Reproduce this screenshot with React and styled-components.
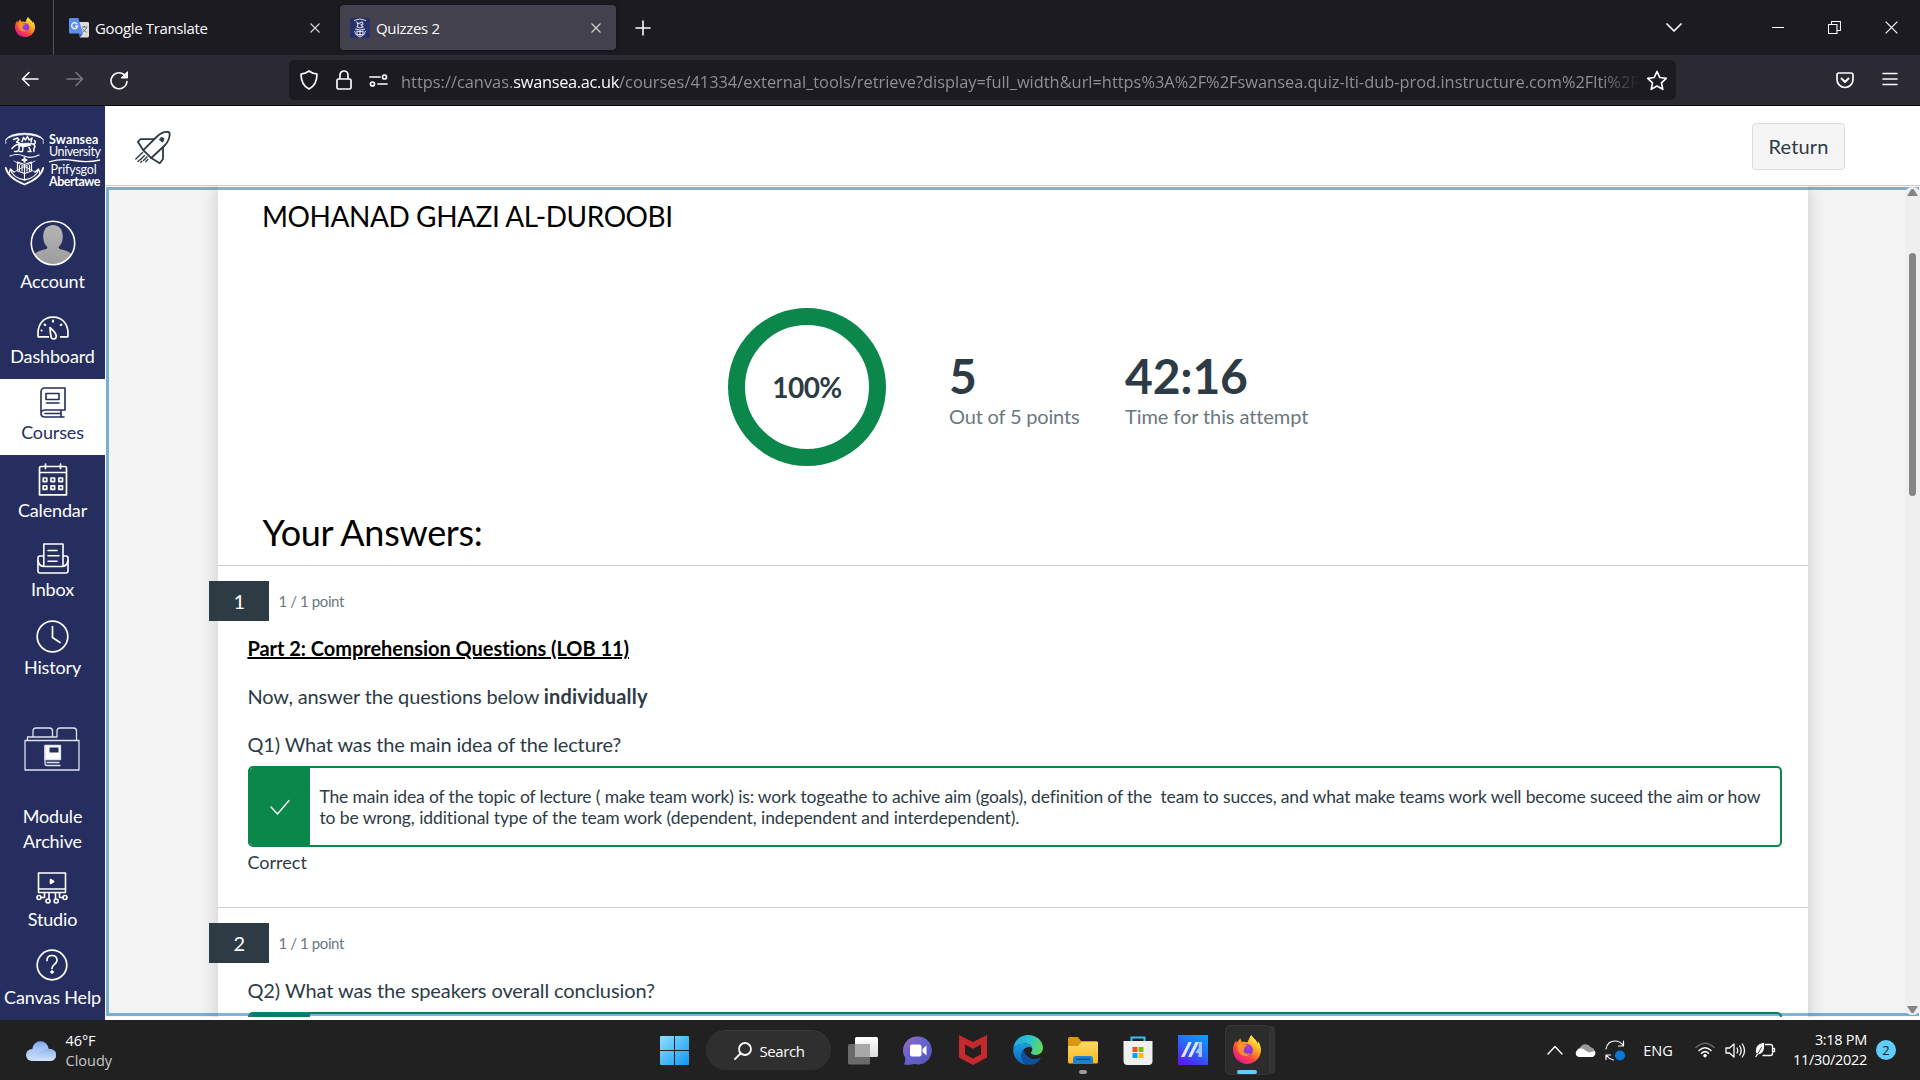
import React from 'react';
import styled, { createGlobalStyle } from 'styled-components';

const lato = `Lato, "Liberation Sans", sans-serif`;
const system = `"Open Sans", "Noto Sans", sans-serif`;
const navy = '#252e5e';
const green = '#0b874b';
const ink = '#2d3b45';

const Global = createGlobalStyle`
  * { box-sizing: border-box; }
  html, body { margin: 0; padding: 0; overflow: hidden; background: #fff; }
  svg { display: block; flex: none; }
`;

const Screen = styled.div`
  width: 1920px;
  height: 1080px;
  display: flex;
  flex-direction: column;
  overflow: hidden;
  font-family: ${lato};
  color: ${ink};
`;

/* ---------- browser chrome ---------- */

const TabStrip = styled.div`
  height: 55px;
  flex: none;
  display: flex;
  align-items: stretch;
  background: #1c1b22;
  color: #fbfbfe;
  font-family: ${system};
`;

const PinnedSlot = styled.div`
  width: 54px;
  display: flex;
  align-items: center;
  padding: 0 0 1px 15px;
  border-right: 1px solid #53525a;
`;

const Tab = styled.div`
  width: ${p => p.$width}px;
  height: 45px;
  margin: 5px 0 0 ${p => p.$left}px;
  padding: 0 13px 0 ${p => p.$pad}px;
  display: flex;
  align-items: center;
  border-radius: 4px;
  background: ${p => (p.$active ? '#42414d' : 'transparent')};
  box-shadow: ${p => (p.$active ? '0 0 4px rgba(0,0,0,.5)' : 'none')};
`;

const TabTitle = styled.span`
  flex: 1;
  margin-left: 6px;
  font-size: 15px;
  line-height: 20px;
  letter-spacing: -0.35px;
  white-space: nowrap;
`;

const NewTab = styled.div`
  width: 54px;
  display: flex;
  align-items: center;
  justify-content: center;
`;

const WindowControls = styled.div`
  margin-left: auto;
  display: flex;
  align-items: center;
`;

const ControlSlot = styled.div`
  width: ${p => p.$width}px;
  height: 54px;
  display: flex;
  align-items: center;
  justify-content: center;
`;

const Toolbar = styled.div`
  height: 51px;
  flex: none;
  display: flex;
  align-items: center;
  background: #2b2a33;
  border-bottom: 1px solid #0c0c0d;
`;

const NavButtons = styled.div`
  width: 289px;
  display: flex;
  padding-left: 7px;
`;

const ToolSlot = styled.div`
  width: ${p => p.$width || 45}px;
  display: flex;
  justify-content: center;
`;

const UrlBar = styled.div`
  width: 1387px;
  height: 40px;
  display: flex;
  align-items: center;
  padding-left: 2px;
  border-radius: 5px;
  background: #1c1b22;
`;

const UrlText = styled.div`
  width: 1238px;
  margin-left: 5px;
  white-space: nowrap;
  font-family: ${system};
  font-size: 16.4px;
  line-height: 30px;
  padding-top: 3px;
  color: #8f8f96;
  mask-image: linear-gradient(to right, #000 1200px, transparent 1238px);
`;

const UrlHost = styled.span`
  color: #fbfbfe;
  letter-spacing: -0.33px;
`;

const ToolbarEnd = styled.div`
  margin-left: auto;
  display: flex;
  padding-right: 8px;
`;

/* ---------- page ---------- */

const Page = styled.div`
  height: 914px;
  flex: none;
  display: flex;
`;

const Sidebar = styled.nav`
  width: 105px;
  display: flex;
  flex-direction: column;
  background: ${navy};
`;

const Brand = styled.div`
  height: 98px;
  padding: 26px 0 0 5px;
  display: flex;
  gap: 5px;
  color: #fff;
`;

const BrandWords = styled.div`
  display: flex;
  flex-direction: column;
  padding-top: 1.5px;
  font-size: 12.5px;
  line-height: 12px;
`;

const BrandWord = styled.span`
  font-weight: ${p => (p.$bold ? 700 : 400)};
  letter-spacing: ${p => p.$ls || 0}px;
  margin-left: ${p => p.$indent || 0}px;
  white-space: nowrap;
`;

const NavItem = styled.a`
  height: ${p => p.$height}px;
  padding-bottom: ${p => p.$bottom || 10}px;
  display: flex;
  flex-direction: column;
  align-items: center;
  justify-content: flex-end;
  background: ${p => (p.$active ? '#fff' : 'transparent')};
  color: ${p => (p.$active ? navy : '#fff')};
`;

const NavLabel = styled.span`
  margin-top: ${p => p.$gap}px;
  font-size: 18px;
  line-height: 25px;
  letter-spacing: -0.15px;
  text-align: center;
  white-space: pre-line;
`;

const Main = styled.main`
  flex: 1;
  display: flex;
  flex-direction: column;
  background: #fff;
`;

const TopBar = styled.header`
  height: 80px;
  flex: none;
  display: flex;
  align-items: center;
  justify-content: space-between;
  padding: 0 75px 0 29px;
  border-bottom: 1px solid #c7cdd1;
`;

const ReturnButton = styled.button`
  width: 93px;
  height: 47px;
  margin-top: 1px;
  padding: 0;
  border: 1px solid #d9dcde;
  border-radius: 4px;
  background: #f5f5f5;
  color: ${ink};
  font: 400 20px/24px ${lato};
  letter-spacing: 0.15px;
`;

const ToolFrame = styled.section`
  position: relative;
  height: 831px;
  margin-left: 1px;
  display: flex;
  background: #f4f4f4;
  overflow: hidden;
`;

const FocusRing = styled.div`
  position: absolute;
  inset: 1px 1px 1px 0;
  border: 3px solid rgba(0, 105, 180, 0.5);
  border-right: 0;
  pointer-events: none;
`;

const Paper = styled.article`
  width: 1590px;
  height: 860px;
  margin-left: 112px;
  background: #fff;
  box-shadow: 0 0 18px rgba(0, 0, 0, 0.18);
  display: flex;
  flex-direction: column;
`;

const StudentName = styled.h2`
  margin: 13px 0 0 44px;
  font-size: 28px;
  font-weight: 400;
  line-height: 34px;
  letter-spacing: -0.43px;
  color: #000;
`;

const Results = styled.div`
  margin: 75px 0 0 510px;
  display: flex;
  align-items: center;
`;

const ScoreRing = styled.div`
  width: 158px;
  height: 158px;
  margin-right: 63px;
  display: flex;
  align-items: center;
  justify-content: center;
  border: 17.5px solid ${green};
  border-radius: 50%;
  font-size: 28px;
  font-weight: 700;
  letter-spacing: -0.6px;
`;

const Stat = styled.div`
  width: ${p => p.$width}px;
  display: flex;
  flex-direction: column;
`;

const StatValue = styled.strong`
  font-size: 48px;
  line-height: 57px;
  letter-spacing: -0.2px;
`;

const StatLabel = styled.span`
  font-size: 20px;
  line-height: 24px;
  letter-spacing: ${p => p.$ls}px;
  color: #6b7780;
`;

const AnswersTitle = styled.h1`
  margin: 44px 0 11px 44.5px;
  font-size: 36px;
  font-weight: 400;
  line-height: 44px;
  letter-spacing: -0.3px;
  color: #000;
`;

const Question = styled.section`
  height: ${p => p.$height}px;
  flex: none;
  padding: 15px 26px 0 30px;
  border-top: 1px solid #c7cdd1;
`;

const QuestionHead = styled.div`
  height: 40px;
  margin-left: -39px;
  display: flex;
  align-items: center;
  gap: 9.5px;
  font-size: 15px;
  letter-spacing: -0.4px;
  color: #6b7780;
`;

const QuestionNumber = styled.div`
  width: 60px;
  height: 40px;
  background: ${ink};
  color: #fff;
  font-size: 20px;
  line-height: 41px;
  text-align: center;
`;

const Prompt = styled.div`
  margin: 15px 0 0 -0.6px;
  display: flex;
  flex-direction: column;
  gap: 24px;
  font-size: 20px;
  line-height: 24px;
  letter-spacing: ${p => p.$ls}px;
`;

const PromptTitle = styled.strong`
  color: #000;
  letter-spacing: -0.03px;
  text-decoration: underline;
`;

const Strong = styled.strong`
  letter-spacing: 0.18px;
`;

const AnswerBox = styled.div`
  height: 81px;
  margin-top: 10px;
  display: flex;
  border: 2px solid ${green};
  border-radius: 5px;
  overflow: hidden;
`;

const AnswerMark = styled.div`
  width: 60px;
  display: flex;
  align-items: center;
  justify-content: center;
  background: ${green};
`;

const AnswerText = styled.div`
  padding: 18px 0 0 9.4px;
  font-size: 17.5px;
  line-height: 21px;
  white-space: pre;
`;

const AnswerLine = styled.div`
  letter-spacing: ${p => p.$ls}px;
`;

const Verdict = styled.div`
  margin: 4px 0 0 -0.5px;
  font-size: 18px;
  line-height: 22px;
`;

const Scrollbar = styled.div`
  position: absolute;
  top: 0;
  right: 0;
  width: 15px;
  height: 831px;
  display: flex;
  flex-direction: column;
  align-items: center;
`;

const ScrollTrack = styled.div`
  width: 15px;
  height: 828px;
  margin-top: 1px;
  padding: 2px 0 1px;
  display: flex;
  flex-direction: column;
  justify-content: space-between;
  align-items: center;
  border-radius: 7px;
  background: #efefef;
`;

const Thumb = styled.div`
  width: 7px;
  height: 243px;
  margin: 57px 0 auto;
  border-radius: 4px;
  background: #858585;
`;

/* ---------- taskbar ---------- */

const Taskbar = styled.footer`
  height: 60px;
  flex: none;
  display: flex;
  align-items: center;
  background: #212121;
  color: #fff;
  font-family: ${system};
  font-size: 14.5px;
  line-height: 20px;
`;

const Weather = styled.div`
  width: 660px;
  display: flex;
  align-items: center;
  gap: 9.5px;
  padding: 1px 0 0 26px;
`;

const Reading = styled.div`
  letter-spacing: -0.1px;
`;

const Muted = styled.div`
  color: #c8c8c8;
  letter-spacing: 0;
`;

const SearchPill = styled.div`
  width: 125px;
  height: 40px;
  margin: 0 4px 0 17px;
  display: flex;
  align-items: center;
  justify-content: center;
  gap: 7px;
  padding-left: 2px;
  border-radius: 20px;
  background: #2f2f2f;
  border-top: 1px solid #3a3a3a;
  font-size: 15px;
  letter-spacing: -0.4px;
`;

const AppSlot = styled.div`
  width: 55px;
  height: 60px;
  display: flex;
  flex-direction: column;
  align-items: center;
  justify-content: center;
  padding-top: ${p => (p.$mark ? 10 : 0)}px;
`;

const AppTile = styled.div`
  width: 45px;
  height: 50px;
  margin-left: -1px;
  padding-top: 9px;
  display: flex;
  flex-direction: column;
  align-items: center;
  border-radius: 5px;
  border: 1px solid #363636;
  background: #2c2c2c;
  box-shadow: 6px 0 0 -1px #333;
`;

const AppMark = styled.div`
  width: ${p => p.$width}px;
  height: 4px;
  margin-top: 6px;
  border-radius: 2px;
  background: ${p => p.$color};
`;

const Tray = styled.div`
  margin-left: auto;
  display: flex;
  align-items: center;
  padding-right: 24px;
`;

const TraySlot = styled.div`
  width: 30px;
  display: flex;
  justify-content: center;
`;

const Language = styled.div`
  width: 60px;
  padding: 1px 4px 0 0;
  text-align: center;
`;

const Clock = styled.div`
  width: 87px;
  text-align: right;
  letter-spacing: -0.3px;
`;

const Badge = styled.div`
  width: 20px;
  height: 20px;
  margin-left: 9px;
  border-radius: 50%;
  background: #60cdff;
  color: #1a1a1a;
  font-size: 13px;
  text-align: center;
`;

/* ---------- icons ---------- */

const Firefox = ({ w, h, id }) => (
  <svg width={w} height={h} viewBox="0 0 28 28" preserveAspectRatio="none">
    <defs>
      <linearGradient id={id + 'a'} x1="0.85" y1="0.1" x2="0.25" y2="0.95">
        <stop offset="0" stopColor="#fff44f" />
        <stop offset="0.35" stopColor="#ffa81c" />
        <stop offset="0.65" stopColor="#ff4a3c" />
        <stop offset="1" stopColor="#e3178d" />
      </linearGradient>
      <radialGradient id={id + 'b'} cx="0.6" cy="0.3" r="0.8">
        <stop offset="0" stopColor="#b833e1" />
        <stop offset="1" stopColor="#5a3fd6" />
      </radialGradient>
    </defs>
    <path d="M18.2 0c2 3 5 4.300 6.700 8.300.2-1 .1-2-.1-2.600C27.500 9 28.500 13 27.700 17 26.300 23.600 20.700 28 14 28 6.300 28 0 22 0 14.300 0 10.500 1.300 7.500 3.300 5.400c0 1 .2 1.700.5 2.300C4.800 6 6.400 4.600 7.600 3.200c0 1.500.5 2.600 1.400 3.500 2-.5 3.800-.2 5.300.6C15.600 5 16.500 2 18.200 0z" fill={`url(#${id}a)`} />
    <circle cx="14.300" cy="14.300" r="5.600" fill={`url(#${id}b)`} />
    <path d="M4.500 9.300c2.500-1.500 5-1 7 .3 1 .1 2.200 0 2.800.3-.2 1.300-2.300 1.700-3 2.600-.3 1 .3 2.200-.7 3 .8 2.500 4.200 3.300 7 1.900-2 4-8.600 4-11.400-.2-1.700-2.500-2-5.500-1.700-7.900z" fill="#ff9a24" opacity=".85" />
  </svg>
);

const TranslateIcon = () => (
  <svg width="20" height="20" viewBox="0 0 20 20">
    <path d="M8 4h10.500c.8 0 1.500.6 1.500 1.500V18c0 .8-.6 1.500-1.500 1.500H11z" fill="#dcdcdc" />
    <path d="M10 15.500h4L11 19.600z" fill="#3a5bc7" />
    <path d="M1.300 0h8L14 15.500H1.300C.6 15.500 0 15 0 14.200V1.300C0 .6.600 0 1.300 0z" fill="#5c8df0" />
    <path d="M8.300 6.300A3 3 0 1 0 8.600 8.200H6" fill="none" stroke="#fff" strokeWidth="1.200" />
    <path d="M12.800 9h5.500M15.500 7.800V9m2 0c-.5 2.500-2 4-4 5m0-3.500c.8 1.500 2.300 3 4.300 3.800" fill="none" stroke="#6d7780" strokeWidth="1" />
  </svg>
);

const CrestFavicon = () => (
  <svg width="20" height="20" viewBox="0 0 20 20">
    <rect width="20" height="20" fill="#27316a" />
    <g fill="none" stroke="#d7dae8" strokeWidth="1">
      <path d="M4 2.500q6-3 12 0M5 11q5 2 10 0M4.500 13q1 5 5.500 6 4.500-1 5.500-6" />
      <path d="M7 4.500l2 1 3-1.500 1 2-2 1 2 2-3 1-3-1 1-2zM7 13l3 1 3-1v3l-3 1-3-1zM10 12v6" strokeWidth="1.100" />
    </g>
  </svg>
);

const Cross = ({ size = 10, color = '#d5d5da', sw = 1.1 }) => (
  <svg width={size} height={size} viewBox="0 0 10 10">
    <path d="M.5.5l9 9M9.500.5l-9 9" stroke={color} strokeWidth={sw} fill="none" />
  </svg>
);

const Line = ({ w, h, d, sw = 1.6, color = '#fbfbfe', fill = 'none', children }) => (
  <svg width={w} height={h} viewBox={`0 0 ${w} ${h}`} fill={fill} stroke={color} strokeWidth={sw} strokeLinecap="round" strokeLinejoin="round">
    {d && <path d={d} />}
    {children}
  </svg>
);

const Crest = () => (
  <svg width="39" height="54" viewBox="0 0 39 54" fill="none" stroke="#fff" strokeLinecap="round" strokeLinejoin="round">
    <path d="M.5 8Q4 1.500 19.500 1.200 35 1.500 38.500 8 34 3.200 19.500 2.600 5 3.200.5 8z" fill="#fff" strokeWidth=".8" />
    <path d="M.8 9v2.500M38.200 9v2.500" strokeWidth=".8" />
    <path d="M5 24q7-3 14 0t15-1" strokeWidth="1.200" />
    <path d="M.8 36Q3 46 19.500 52.500 36 46 38.200 36" strokeWidth="1.800" />
    <path d="M8.500 7.500l4-1.500 1.500 2-2.500 2 3.500 1.500M17 9.500l1.500-4 2 2.500 2-3.500 1.500 3.500 3-2-1 4M29 12q2.500-1.500.5-3.500M9 14.500q3-3 6-1.500 5 2 10-1 4-1 5 2.500-2 2.500-1 5M14 14q1 3-1.500 5.500H9.500M18 15.500l-.5 4h-3M24 15.500l2 4h-3M9 14.500l-2 2" strokeWidth="1.500" />
    <path d="M15 11.500l9-.5 2 2.500-8 1.500-3-1z" fill="#fff" strokeWidth=".6" />
    <path d="M19.500 26v4M17.500 28h4" strokeWidth="2" />
    <path d="M12.500 30l7 2.500 7-2.500v9l-7 2.500-7-2.500zM19.500 32.500v15" strokeWidth="1.200" />
    <path d="M14.500 33.500v5M17 34v5M22 34v5M24.500 33.500v5" strokeWidth="1.100" />
    <path d="M5.500 37q1.500 8.500 14 11 12.500-2.500 14-11M5.500 37l-1.500 4M5.500 37l3.500 3M33.500 37l1.500 4M33.500 37l-3.500 3" strokeWidth="1.300" />
    <path d="M9 29l21 11M30 29L9 40" strokeWidth=".8" />
  </svg>
);

const Avatar = () => (
  <svg width="46" height="46" viewBox="0 0 46 46">
    <defs>
      <clipPath id="avatarClip"><circle cx="23" cy="23" r="21.500" /></clipPath>
      <linearGradient id="avatarFill" x1="0" y1="0" x2="0" y2="1">
        <stop offset="0" stopColor="#b4b4b4" /><stop offset="1" stopColor="#9c9c9c" />
      </linearGradient>
    </defs>
    <g clipPath="url(#avatarClip)" fill="url(#avatarFill)">
      <path d="M23 5c6.500 0 9.800 5 9.800 11.500 0 5-1.800 8.500-4.300 10.800.3 1.500 1.500 2 4 2.500 6 1 9.500 4 10.500 7V46H3v-9.200c1-3 4.500-6 10.500-7 2.500-.5 3.700-1 4-2.500-2.500-2.300-4.300-5.800-4.300-10.800C13.200 10 16.500 5 23 5z" />
    </g>
    <circle cx="23" cy="23" r="21.700" fill="none" stroke="#fff" strokeWidth="1.600" />
  </svg>
);

const icons = {
  dashboard: (
    <Line w={32} h={24} sw={1.7} color="#fff">
      <path d="M12 20.800H1.200C-.2 9 6 1.200 16 1.200S32.200 9 30.800 20.800H23" strokeLinecap="butt" />
      <path d="M13 11.500c3 3 6.200 5.500 6.200 8.500a2.600 2.600 0 0 1-5.200.5c-.5-2.500-.8-5.500-1-9z" />
      <path d="M16 4.500v1.300M7.500 8.500l.8.600M24.500 8.500l-.8.600M4.500 14.500h.1" strokeWidth="2" />
    </Line>
  ),
  courses: (
    <Line w={26} h={31} sw={1.6} color={navy}>
      <path d="M4.500 1H25v22H5c-2.300 0-4 1.500-4 3.500S2.700 30 5 30h19M1 26V4.500C1 2.500 2.500 1 4.500 1M21 23v7M5 26.500h16" />
      <path d="M6 6.500h13v6H6zM6.500 16h12.500" />
    </Line>
  ),
  calendar: (
    <Line w={30} h={33} sw={1.7} color="#fff">
      <path d="M1.500 31.800V5q0-1.500 1.500-1.500h24q1.500 0 1.500 1.500v26.800zM1.500 9.500h27M7.500 1v4.500M22.500 1v4.500" />
      <path d="M5.200 15h3.600v3.600H5.200zM13 15h3.600v3.600H13zM20.900 15h3.600v3.600h-3.600zM5.200 22.800h3.600v3.600H5.200zM13 22.800h3.600v3.600H13zM20.900 22.800h3.600v3.600h-3.600z" />
    </Line>
  ),
  inbox: (
    <Line w={32} h={31} sw={1.6} color="#fff">
      <path d="M6.800 22.500V1H26v21.500M6.500 13H3q-2 0-2 2v13q0 2 2 2h26q2 0 2-2V15q0-2-2-2h-3" />
      <path d="M1 17.500q1 6 6.500 6h17q5.500 0 6.500-6M11 7.500h9M11 12.800h11M11 18.200h9" />
    </Line>
  ),
  history: (
    <Line w={33} h={33} sw={1.7} color="#fff">
      <circle cx="16.500" cy="16.500" r="15.300" />
      <path d="M16.500 6.500v11l7.500 5" />
    </Line>
  ),
  archive: (
    <Line w={58} h={44} sw={1.3} color="#dfe2ef">
      <path d="M1 13.500h54v29.500H1zM3.500 13V10h29M9 10V4q0-3 3-3h13.500q3 0 3 3v5.500M33 10V4q0-3 3-3h13.500q3 0 3 3v9" />
      <path d="M21 18.500h15.500v14H21z" fill="#fff" />
      <path d="M25.500 20.500h9v5h-9z" fill={navy} stroke="none" />
      <path d="M21 19v17.500q0 2 2 2h13M23 35.500h12" />
    </Line>
  ),
  studio: (
    <Line w={35} h={32} sw={1.600} color="#fff">
      <path d="M3.500 1h27v19.500h-27zM3.500 17h27M9.500 20.500v5H6M24.500 20.500v5H28M14 20.500v6M20.500 20.500v6" />
      <path d="M15.500 7.500v4l3.200-2z" fill="#fff" />
      <circle cx="4" cy="25.500" r="2" /><circle cx="30" cy="25.500" r="2" />
      <circle cx="13" cy="29" r="2" /><circle cx="21.200" cy="29" r="2" />
    </Line>
  ),
  help: (
    <Line w={33} h={32} sw={1.700} color="#fff">
      <circle cx="16" cy="16" r="14.800" />
      <path d="M11 11.500q0-5 5-5t5 4.700c0 2-1.200 3-2.600 4.200C16.800 16.800 16 17.500 16 19.500" />
      <circle cx="16" cy="23" r="1.300" fill="#fff" strokeWidth="1" />
    </Line>
  ),
};

const Rocket = () => (
  <svg width="38" height="38" viewBox="134 128.500 38 38" fill="none" stroke={ink} strokeWidth="1.800" strokeLinejoin="round" strokeLinecap="round">
    <path d="M143.300 151.700L156.500 138.500Q162 133 168 133.500q1.800.2 1.700 2.500-.2 5.500-4.500 10.500L151.200 159.500z" />
    <path d="M143.300 151.700L137.800 143.300l2.700-2.600h13.200M163 149v11.500l-3.200 4.300-8.600-5.300" />
    <path d="M135.800 160.500l6.800-6.500M138 163l1.500-1.500M140.500 161l4-4M140.800 163.800l1-1M143.500 162l3.500-3.500M145.800 163l2-2" strokeWidth="1.400" />
    <path d="M161.500 139l2.500 1-1.200 3.500-3-1.800z" fill={ink} strokeWidth="1" />
  </svg>
);

const CloudIcon = () => (
  <svg width="30" height="20" viewBox="0 0 30 20">
    <defs>
      <linearGradient id="cl" x1="0" y1="0" x2="0" y2="1"><stop offset="0" stopColor="#7fa5ee" /><stop offset="1" stopColor="#d9e9fd" /></linearGradient>
      <linearGradient id="cl2" x1="0" y1="0" x2="0" y2="1"><stop offset="0" stopColor="#a5c3f5" /><stop offset="1" stopColor="#cfe2fc" /></linearGradient>
    </defs>
    <circle cx="14.500" cy="8.500" r="8.300" fill="url(#cl)" />
    <path d="M6 8h18a6 6 0 0 1 0 12H6A6 6 0 0 1 6 8z" fill="url(#cl2)" />
    <path d="M12 20a6.500 6.500 0 0 1 4-10q5-3.500 9-2a6 6 0 0 1-1 12z" fill="url(#cl)" opacity=".6" />
  </svg>
);

const StartIcon = () => (
  <svg width="29" height="29" viewBox="0 0 29 29">
    <defs><linearGradient id="win" x1="0" y1="0" x2="1" y2="1"><stop offset="0" stopColor="#8fe0ff" /><stop offset="1" stopColor="#0f95f5" /></linearGradient></defs>
    <path d="M1 0h13v14H0V1q0-1 1-1zM15 0h13q1 0 1 1v13H15zM0 15h14v14H1q-1 0-1-1zM15 15h14v13q0 1-1 1H15z" fill="url(#win)" />
  </svg>
);

const TaskViewIcon = () => (
  <svg width="30" height="29" viewBox="0 0 30 29">
    <defs><linearGradient id="tv" x1="0" y1="0" x2="0" y2="1"><stop offset="0" stopColor="#fff" /><stop offset="1" stopColor="#ddd" /></linearGradient></defs>
    <rect x="0" y="8" width="22" height="20.500" rx="1.500" fill="#6a6a6a" />
    <rect x="7" y="1" width="23" height="20" rx="1.500" fill="url(#tv)" />
    <rect x="7" y="8" width="15" height="13" fill="#a8a8a8" />
  </svg>
);

const ChatIcon = () => (
  <svg width="30" height="29" viewBox="0 0 30 29">
    <defs><linearGradient id="ch" x1="0" y1="0" x2="1" y2="1"><stop offset="0" stopColor="#a06bb5" /><stop offset=".4" stopColor="#6a63cf" /><stop offset="1" stopColor="#4f55b8" /></linearGradient></defs>
    <path d="M15 .5a14 14 0 1 1-3.500 27.600Q6 29.500 1 28.500 2.500 26 2.300 22A14 14 0 0 1 15 .5z" fill="url(#ch)" />
    <rect x="7" y="8.500" width="11.500" height="12" rx="2" fill="#fff" />
    <path d="M19.500 13l4-3.500v10l-4-3.500z" fill="#fff" />
  </svg>
);

const McAfeeIcon = () => (
  <svg width="28" height="30" viewBox="0 0 28 30">
    <path d="M0 0l14 7 14-7v22.500L14 30 0 22.500zM6 9.500v9.800l8 4.200 8-4.200V9.500l-8 4.200z" fill="#c5292b" fillRule="evenodd" />
  </svg>
);

const EdgeIcon = () => (
  <svg width="30" height="30" viewBox="0 0 30 30">
    <defs>
      <linearGradient id="e1" x1="0" y1=".3" x2="1" y2=".5"><stop offset="0" stopColor="#1fa4e0" /><stop offset=".5" stopColor="#2cc3d0" /><stop offset="1" stopColor="#63d957" /></linearGradient>
      <linearGradient id="e2" x1="0" y1="0" x2="0" y2="1"><stop offset="0" stopColor="#1b9de2" /><stop offset="1" stopColor="#0a62b8" /></linearGradient>
    </defs>
    <path d="M.3 13.500C1 5.500 7.500 0 15 0c8.500 0 15 6 15 12.800 0 4.500-3.300 7.200-7.200 7.200-3 0-5-1-5-2.200 0-.8 1.400-1.600 1.400-3.800 0-3-3-5.400-7.200-5.400C7 8.600 2.500 10.500.3 13.500z" fill="url(#e1)" />
    <path d="M12 8.600c-6 0-10.500 2.400-11.800 5.500C-.5 22 6 30 15 30c-4-1.500-6.500-5.500-6.500-9.500 0-5 3.500-8 7-8.500 1.500-.1 3 .5 3.700 2 0-3-3-5.400-7.200-5.400z" fill="url(#e2)" />
    <path d="M11 14.500c-3 3-3.500 8-.5 12 2.500 3.500 7.500 4.200 11.500 2.300 2.500-1.200 4.500-3 5.800-5.200.4-.8-.3-1.200-1-.8-5 2.500-11.500 1.200-14.300-3.600-1-1.600-1.700-3.200-1.500-4.700z" fill="#1050a0" />
    <path d="M15.500 12c-2.500.6-3 4-.8 7.200 2.500 3.600 6.500 4.800 10.500 4.300-7 .5-9-3.500-7.400-5.700.8-1.300 1.400-2 1.400-3.800-.7-1.500-2.200-2.200-3.700-2z" fill="#212121" opacity=".9" />
  </svg>
);

const ExplorerIcon = () => (
  <svg width="30" height="27" viewBox="0 0 30 27">
    <defs><linearGradient id="ex" x1="0" y1="0" x2="0" y2="1"><stop offset="0" stopColor="#ffd868" /><stop offset="1" stopColor="#f9b915" /></linearGradient></defs>
    <path d="M0 1.500Q0 0 1.500 0H10l3 4h15q2 0 2 2v5H0z" fill="#d9970c" />
    <path d="M0 9h10l3.500-4H30v20q0 1.500-1.500 1.500h-27Q0 26.500 0 25z" fill="url(#ex)" />
    <path d="M5 26.500V22q0-3 3-3h14q3 0 3 3v4.500z" fill="#1a83d8" />
    <path d="M8 22.300h14" stroke="#0c5190" strokeWidth="1.500" />
  </svg>
);

const StoreIcon = () => (
  <svg width="30" height="29" viewBox="0 0 30 29">
    <path d="M8.500 6V1.500h13V6" fill="none" stroke="#35c1f1" strokeWidth="2" />
    <path d="M.5 5h29v20q0 4-4 4h-21q-4 0-4-4z" fill="#f0f0f0" />
    <path d="M9.500 11h5v5h-5z" fill="#f25022" /><path d="M15.500 11h5v5h-5z" fill="#7fba00" />
    <path d="M9.500 17h5v5h-5z" fill="#00a4ef" /><path d="M15.500 17h5v5h-5z" fill="#ffb900" />
  </svg>
);

const AsusIcon = () => (
  <svg width="30" height="30" viewBox="0 0 30 30">
    <defs><linearGradient id="as" x1=".8" y1="0" x2=".2" y2="1"><stop offset="0" stopColor="#0e9bff" /><stop offset=".5" stopColor="#2b62f5" /><stop offset="1" stopColor="#5b18f0" /></linearGradient></defs>
    <rect width="30" height="30" fill="url(#as)" />
    <path d="M3 22L10.500 7h3.300L6.500 22zM10 22L17.500 7H21l-7.500 15z" fill="#dfe8ff" />
    <path d="M21 7h3v15h-3.500v-4h-3l2-4h1z" fill="#a9c3fb" />
  </svg>
);

const FileCloud = () => (
  <svg width="21" height="14" viewBox="0 0 21 14">
    <path d="M5 4.500A6 6 0 0 1 15.500 4Q19 5 20 8L8 13 1 11q0-5 4-6.500z" fill="#9a9a9a" />
    <path d="M1 9q2-4 6-3.500l7 4 6-1.500q1.500 4-2 6H4Q0 13 1 9z" fill="#fff" />
  </svg>
);

/* ---------- content ---------- */

const navItems = [
  { label: 'Account', height: 100, gap: 3, icon: <Avatar /> },
  { label: 'Dashboard', height: 75, gap: 4, icon: icons.dashboard },
  { label: 'Courses', height: 76, gap: 2, icon: icons.courses, active: true },
  { label: 'Calendar', height: 78, gap: 2, icon: icons.calendar },
  { label: 'Inbox', height: 79, gap: 3, icon: icons.inbox },
  { label: 'History', height: 78, gap: 2, icon: icons.history },
  { label: 'Module\nArchive', height: 173, gap: 33, bottom: 9, icon: icons.archive },
  { label: 'Studio', height: 78, gap: 3, bottom: 9, icon: icons.studio },
  { label: 'Canvas Help', height: 79, gap: 4, icon: icons.help },
];

const firstAnswer = [
  { ls: -0.145, text: 'The main idea of the topic of lecture ( make team work) is: work togeathe to achive aim (goals), definition of the  team to succes, and what make teams work well become suceed the aim or how' },
  { ls: -0.08, text: 'to be wrong, idditional type of the team work (dependent, independent and interdependent).' },
];

function Answer({ lines = [] }) {
  return (
    <AnswerBox>
      <AnswerMark>
        <Line w={20} h={16} sw={1.3} color="#fff" d="M1 8l6.500 7L19 1.500" />
      </AnswerMark>
      <AnswerText>
        {lines.map(l => <AnswerLine key={l.text} $ls={l.ls}>{l.text}</AnswerLine>)}
      </AnswerText>
    </AnswerBox>
  );
}

function Chrome() {
  return (
    <>
      <TabStrip>
        <PinnedSlot><Firefox w={20} h={20} id="ffs" /></PinnedSlot>
        <Tab $width={286} $left={0} $pad={15}>
          <TranslateIcon />
          <TabTitle>Google Translate</TabTitle>
          <ControlSlot $width={24}><Cross /></ControlSlot>
        </Tab>
        <Tab $width={276} $left={0} $pad={10} $active>
          <CrestFavicon />
          <TabTitle>Quizzes 2</TabTitle>
          <ControlSlot $width={14}><Cross /></ControlSlot>
        </Tab>
        <NewTab><Line w={16} h={16} sw={1.6} d="M8 1v14M1 8h14" /></NewTab>
        <WindowControls>
          <ControlSlot $width={76}><Line w={16} h={9} sw={1.7} d="M1 1l7 7 7-7" /></ControlSlot>
          <ControlSlot $width={38} />
          <ControlSlot $width={56}><Line w={12} h={2} sw={1} d="M0 .5h12" /></ControlSlot>
          <ControlSlot $width={57}><Line w={13} h={13} sw={1.1} d="M.5 3.500h8.500v9H.5zM3.500 3.500V.5h9v9H9" /></ControlSlot>
          <ControlSlot $width={57}><Cross size={13} color="#fff" sw={0.9} /></ControlSlot>
        </WindowControls>
      </TabStrip>
      <Toolbar>
        <NavButtons>
          <ToolSlot><Line w={18} h={16} d="M17 8H1.500M8 1.500L1.500 8 8 14.500" /></ToolSlot>
          <ToolSlot><Line w={18} h={16} color="#77767e" d="M1 8h15.500M10 1.500L16.500 8 10 14.500" /></ToolSlot>
          <ToolSlot>
            <Line w={19} h={19}><path d="M17 10.500a8 8 0 1 1-3-7" /><path d="M17.500 1v6h-6z" fill="#fbfbfe" strokeWidth="1" /></Line>
          </ToolSlot>
        </NavButtons>
        <UrlBar>
          <ToolSlot $width={35}><Line w={18} h={20} sw={1.7} d="M9 1c2.500 2 5 2.700 8 3 0 7-2 12-8 15C3 16 1 11 1 4c3-.3 5.500-1 8-3z" /></ToolSlot>
          <ToolSlot $width={35}><Line w={16} h={20} sw={1.7} d="M2.500 9h11q1.500 0 1.500 1.500v7q0 1.500-1.500 1.500h-11Q1 19 1 17.500v-7Q1 9 2.500 9zM4 9V5a4 4 0 0 1 8 0v4" /></ToolSlot>
          <ToolSlot $width={35}>
            <Line w={19} h={13} sw={1.7}><path d="M1 3h10M9 10h9" /><circle cx="15.500" cy="3" r="2" /><circle cx="3.500" cy="10" r="2" /></Line>
          </ToolSlot>
          <UrlText>https://canvas.<UrlHost>swansea.ac.uk</UrlHost>/courses/41334/external_tools/retrieve?display=full_width&amp;url=https%3A%2F%2Fswansea.quiz-lti-dub-prod.instructure.com%2Flti%2F</UrlText>
          <ToolSlot $width={36}><Line w={22} h={21} sw={1.7} d="M11 1.500l2.800 6 6.500.8-4.800 4.500 1.300 6.500-5.800-3.200-5.800 3.200 1.300-6.500L1.700 8.300l6.500-.8z" /></ToolSlot>
        </UrlBar>
        <ToolbarEnd>
          <ToolSlot><Line w={18} h={17} sw={1.700}><path d="M3 1h12q2 0 2 2v4.500a8 8 0 0 1-16 0V3q0-2 2-2z" /><path d="M5.500 6.500L9 10l3.500-3.500" strokeWidth="2" /></Line></ToolSlot>
          <ToolSlot><Line w={16} h={14} sw={1.600} d="M1 1.500h14M1 7h14M1 12.500h14" /></ToolSlot>
        </ToolbarEnd>
      </Toolbar>
    </>
  );
}

export default function App() {
  return (
    <Screen>
      <Global />
      <Chrome />
      <Page>
        <Sidebar>
          <Brand>
            <Crest />
            <BrandWords>
              <BrandWord $bold $ls={0.15}>Swansea</BrandWord>
              <BrandWord $ls={-0.42}>University</BrandWord>
              <svg width="51" height="6" viewBox="0 0 51 6"><path d="M0 4Q12 0 25 2.500T51 2" fill="none" stroke="#fff" strokeWidth="1.300" /></svg>
              <BrandWord $indent={1.5} $ls={-0.15}>Prifysgol</BrandWord>
              <BrandWord $bold $ls={-0.45}>Abertawe</BrandWord>
            </BrandWords>
          </Brand>
          {navItems.map(n => (
            <NavItem key={n.label} $height={n.height} $bottom={n.bottom} $active={n.active}>
              {n.icon}
              <NavLabel $gap={n.gap}>{n.label}</NavLabel>
            </NavItem>
          ))}
        </Sidebar>
        <Main>
          <TopBar>
            <Rocket />
            <ReturnButton>Return</ReturnButton>
          </TopBar>
          <ToolFrame>
            <Paper>
              <StudentName>MOHANAD GHAZI AL-DUROOBI</StudentName>
              <Results>
                <ScoreRing>100%</ScoreRing>
                <Stat $width={176}>
                  <StatValue>5</StatValue>
                  <StatLabel $ls={-0.18}>Out of 5 points</StatLabel>
                </Stat>
                <Stat $width={200}>
                  <StatValue>42:16</StatValue>
                  <StatLabel $ls={-0.08}>Time for this attempt</StatLabel>
                </Stat>
              </Results>
              <AnswersTitle>Your Answers:</AnswersTitle>
              <Question $height={342}>
                <QuestionHead><QuestionNumber>1</QuestionNumber>1 / 1 point</QuestionHead>
                <Prompt $ls={-0.14}>
                  <PromptTitle>Part 2: Comprehension Questions (LOB 11)</PromptTitle>
                  <span>Now, answer the questions below <Strong>individually</Strong></span>
                  <span>Q1) What was the main idea of the lecture?</span>
                </Prompt>
                <Answer lines={firstAnswer} />
                <Verdict>Correct</Verdict>
              </Question>
              <Question $height={200}>
                <QuestionHead><QuestionNumber>2</QuestionNumber>1 / 1 point</QuestionHead>
                <Prompt $ls={-0.08}><span>Q2) What was the speakers overall conclusion?</span></Prompt>
                <Answer />
              </Question>
            </Paper>
            <FocusRing />
            <Scrollbar>
              <ScrollTrack>
                <svg width="11" height="7" viewBox="0 0 11 7"><path d="M0 7L4.500 0h2L11 7z" fill="#858585" /></svg>
                <Thumb />
                <svg width="11" height="8" viewBox="0 0 11 8"><path d="M0 0l4.500 7h2L11 0z" fill="#858585" /></svg>
              </ScrollTrack>
            </Scrollbar>
          </ToolFrame>
        </Main>
      </Page>
      <Taskbar>
        <Weather>
          <CloudIcon />
          <Reading>46°F<Muted>Cloudy</Muted></Reading>
        </Weather>
        <StartIcon />
        <SearchPill>
          <Line w={18} h={18} sw={1.800}><circle cx="11" cy="7" r="6" /><path d="M6.500 11.500L1 17" /></Line>
          Search
        </SearchPill>
        <AppSlot><TaskViewIcon /></AppSlot>
        <AppSlot><ChatIcon /></AppSlot>
        <AppSlot><McAfeeIcon /></AppSlot>
        <AppSlot><EdgeIcon /></AppSlot>
        <AppSlot $mark><ExplorerIcon /><AppMark $width={8} $color="#9a9a9a" /></AppSlot>
        <AppSlot><StoreIcon /></AppSlot>
        <AppSlot><AsusIcon /></AppSlot>
        <AppSlot><AppTile><Firefox w={28} h={29} id="fft" /><AppMark $width={20} $color="#60cdff" /></AppTile></AppSlot>
        <Tray>
          <TraySlot><Line w={16} h={10} sw={1.4} d="M1 9l7-7.500L15 9" /></TraySlot>
          <TraySlot><FileCloud /></TraySlot>
          <TraySlot>
            <Line w={20} h={21} sw={1.2}>
              <path d="M1 9Q2.500 1 10 1q5 0 8.500 4.500M18.500 1v5h-5M1 19.500V15h4.500M1.500 15.500Q4 19 8.500 20" />
              <circle cx="15" cy="15.500" r="5" fill="#0a78d8" stroke="none" />
            </Line>
          </TraySlot>
          <Language>ENG</Language>
          <TraySlot>
            <Line w={20} h={16} sw={1.600}>
              <path d="M1 5.500Q10-3 19 5.500" stroke="#666" />
              <path d="M4 8.500Q10 3 16 8.500M6.500 11.300Q10 8 13.500 11.300" />
              <circle cx="10" cy="13.700" r="1.300" fill="#fff" strokeWidth="1" />
            </Line>
          </TraySlot>
          <TraySlot><Line w={21} h={17} sw={1.300} d="M1 6v5h3.500L9 15V2L4.500 6zM12 6q1.500 2.500 0 5M14.700 4q3 4.500 0 9M17.300 2q4.500 6.500 0 13" /></TraySlot>
          <TraySlot>
            <Line w={21} h={16} sw={1.300}>
              <path d="M10.500 2.500h5q2 0 2 2v7q0 2-2 2H8M18.500 6.500h1v3h-1" />
              <path d="M8.500 1.500Q1 3 1.500 9.500q.5 2.500 3 2 4.500-1.500 4-10z" fill="#fff" />
              <path d="M1 14.500l4-6.500" />
              <path d="M3 11.500l3.500-6" stroke="#212121" strokeWidth=".9" />
            </Line>
          </TraySlot>
          <Clock>3:18 PM<br />11/30/2022</Clock>
          <Badge>2</Badge>
        </Tray>
      </Taskbar>
    </Screen>
  );
}
